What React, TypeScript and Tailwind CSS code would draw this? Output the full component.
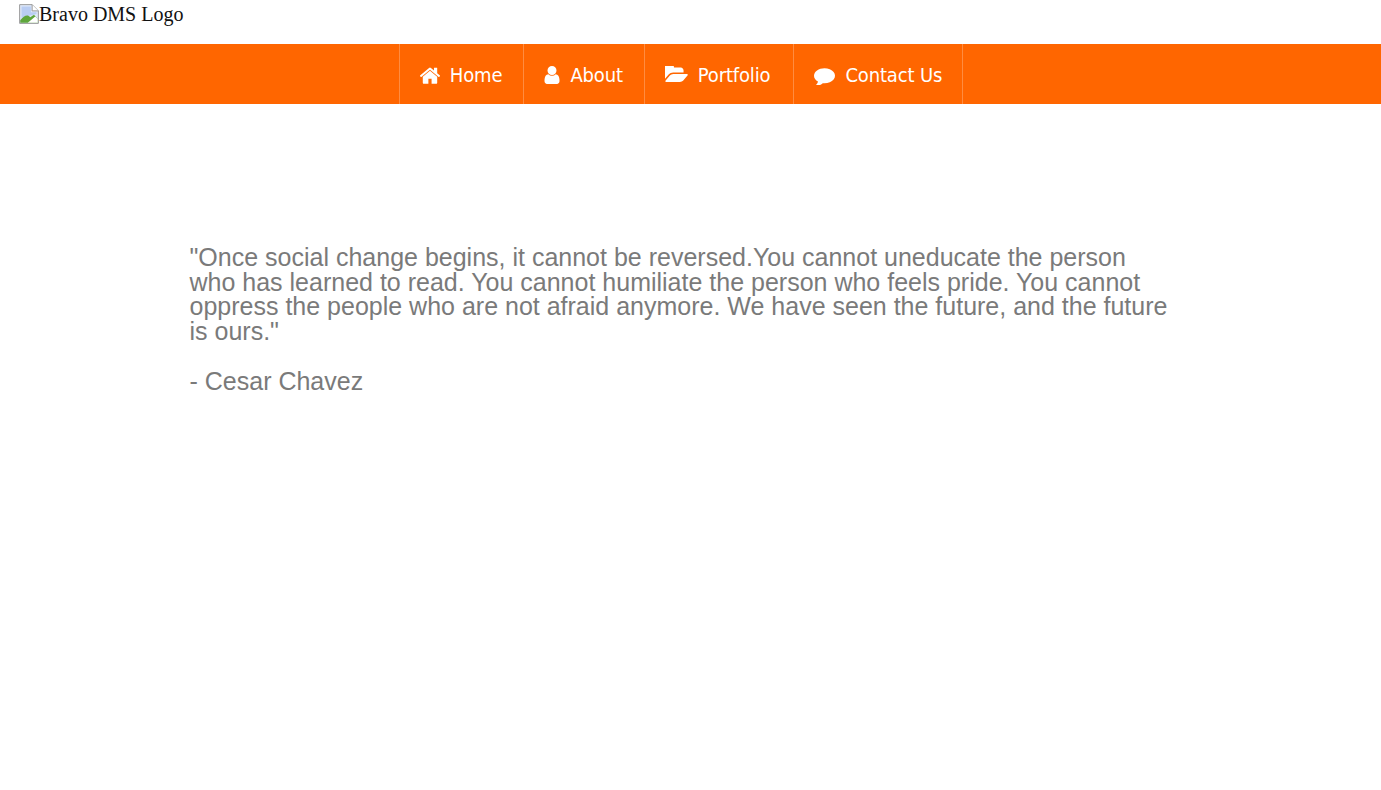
interface NavItem {
  label: string;
  viewBox: string;
  d: string;
  iconClass: string;
  cellClass: string;
}

const NAV_ITEMS: NavItem[] = [
  {
    label: "Home",
    viewBox: "97 230 1600 1310",
    d: "M1472 992v480q0 26-19 45t-45 19h-384v-384h-256v384h-384q-26 0-45-19t-19-45v-480q0-1 .5-3t.5-3l575-474 575 474q1 2 1 6zm223-69l-62 74q-8 9-21 11h-3q-13 0-21-7l-692-577-692 577q-12 8-24 7-13-2-21-11l-62-74q-8-10-7-23.5t11-21.5l719-599q32-26 76-26t76 26l244 204v-195q0-14 9-23t23-9h192q14 0 23 9t9 23v408l219 182q10 8 11 21.5t-7 23.5z",
    iconClass: "w-[20px] h-[17px]",
    cellClass: "pr-[21px]",
  },
  {
    label: "About",
    viewBox: "256 128 1280 1536",
    d: "M1536 1399q0 109-62.5 187t-150.5 78h-854q-88 0-150.5-78t-62.5-187q0-85 8.5-160.5t31.5-152 58.5-131 94-89 134.5-34.5q131 128 313 128t313-128q76 0 134.5 34.5t94 89 58.5 131 31.5 152 8.5 160.5zm-256-887q0 159-112.5 271.5t-271.5 112.5-271.5-112.5-112.5-271.5 112.5-271.5 271.5-112.5 271.5 112.5 112.5 271.5z",
    iconClass: "w-[16px] h-[18px]",
    cellClass: "pr-[21px]",
  },
  {
    label: "Portfolio",
    viewBox: "0 256 1815 1280",
    d: "M1815 952q0 31-31 66l-336 396q-43 51-120.5 86.5t-143.5 35.5h-1088q-34 0-60.5-13t-26.5-43q0-31 31-66l336-396q43-51 120.5-86.5t143.5-35.5h1088q34 0 60.5 13t26.5 43zm-343-344v160h-832q-94 0-197 47.5t-164 119.5l-337 396-5 6q0-4-.5-12.5t-.5-12.5v-960q0-92 66-158t158-66h320q92 0 158 66t66 158v32h544q92 0 158 66t66 158z",
    iconClass: "w-[23px] h-[16px] mb-[2px]",
    cellClass: "pr-[23px]",
  },
  {
    label: "Contact Us",
    viewBox: "0 256 1792 1408",
    d: "M1792 896q0 174-120 321.5t-326 233-450 85.5q-70 0-145-8-198 175-460 242-49 14-114 22-17 2-30.5-9t-17.5-29v-1q-3-4-.5-12t2-10 4.5-9.5l6-9 7-8.5 8-9q7-8 31-34.5t34.5-38 31-39.5 32.5-51 27-59 26-76q-157-89-247.5-220t-90.5-281q0-130 71-248.5t191-204.5 286-136.5 348-50.5q244 0 450 85.5t326 233 120 321.5z",
    iconClass: "w-[21px] h-[17px] mt-[3px]",
    cellClass: "pr-[20px]",
  },
];

function BrokenImageIcon() {
  return (
    <svg width="20" height="20" viewBox="0 0 16 16" className="shrink-0">
      <path d="M0.5 0.5H10.5L15.5 5.5V15.5H0.5Z" fill="#dfe8f8" stroke="#9a9a9a" strokeWidth="0.8" />
      <path d="M10.5 0.5V5.5H15.5" fill="#fff" stroke="#9a9a9a" strokeWidth="0.8" />
      <path d="M2 2H9.5V6.5H14V8L2 11Z" fill="#b9cdf3" />
      <path d="M1 15V13C4 9 7 8 9 10.5L12 8.5L15 12V15Z" fill="#5fa63c" />
      <path d="M7 15L13 10L15 12V15Z" fill="#fff" />
    </svg>
  );
}

export default function App() {
  return (
    <div className="min-h-[790px] bg-white">
      <header className="h-11 pl-[19px] pt-[4px]">
        <div className="flex items-center font-['Liberation_Serif',serif] text-[20px] leading-[20px] text-[#111111]">
          <BrokenImageIcon />
          <span>Bravo DMS Logo</span>
        </div>
      </header>

      <nav className="flex h-[60px] justify-center bg-[#ff6600] pr-[19px]">
        <ul className="flex border-l border-[#ff8c40]">
          {NAV_ITEMS.map((item) => (
            <li
              key={item.label}
              className={`flex items-center gap-[10px] border-r border-[#ff8c40] pl-5 pt-[2px] font-['DejaVu_Sans_Condensed','DejaVu_Sans',sans-serif] text-[20px] tracking-[-0.15px] text-white ${item.cellClass}`}
            >
              <svg viewBox={item.viewBox} fill="currentColor" className={`shrink-0 ${item.iconClass}`}>
                <path d={item.d} />
              </svg>
              {item.label}
            </li>
          ))}
        </ul>
      </nav>

      <main className="mx-auto w-[1002px] pr-4 pt-[141px] font-['Liberation_Sans',sans-serif] text-[25px] leading-[24.7px] text-[#7a7a7a]">
        <p>
          "Once social change begins, it cannot be reversed.You cannot uneducate the person who has
          learned to read. You cannot humiliate the person who feels pride. You cannot oppress the
          people who are not afraid anymore. We have seen the future, and the future is ours."
        </p>
        <p className="mt-[25px]">- Cesar Chavez</p>
      </main>
    </div>
  );
}
